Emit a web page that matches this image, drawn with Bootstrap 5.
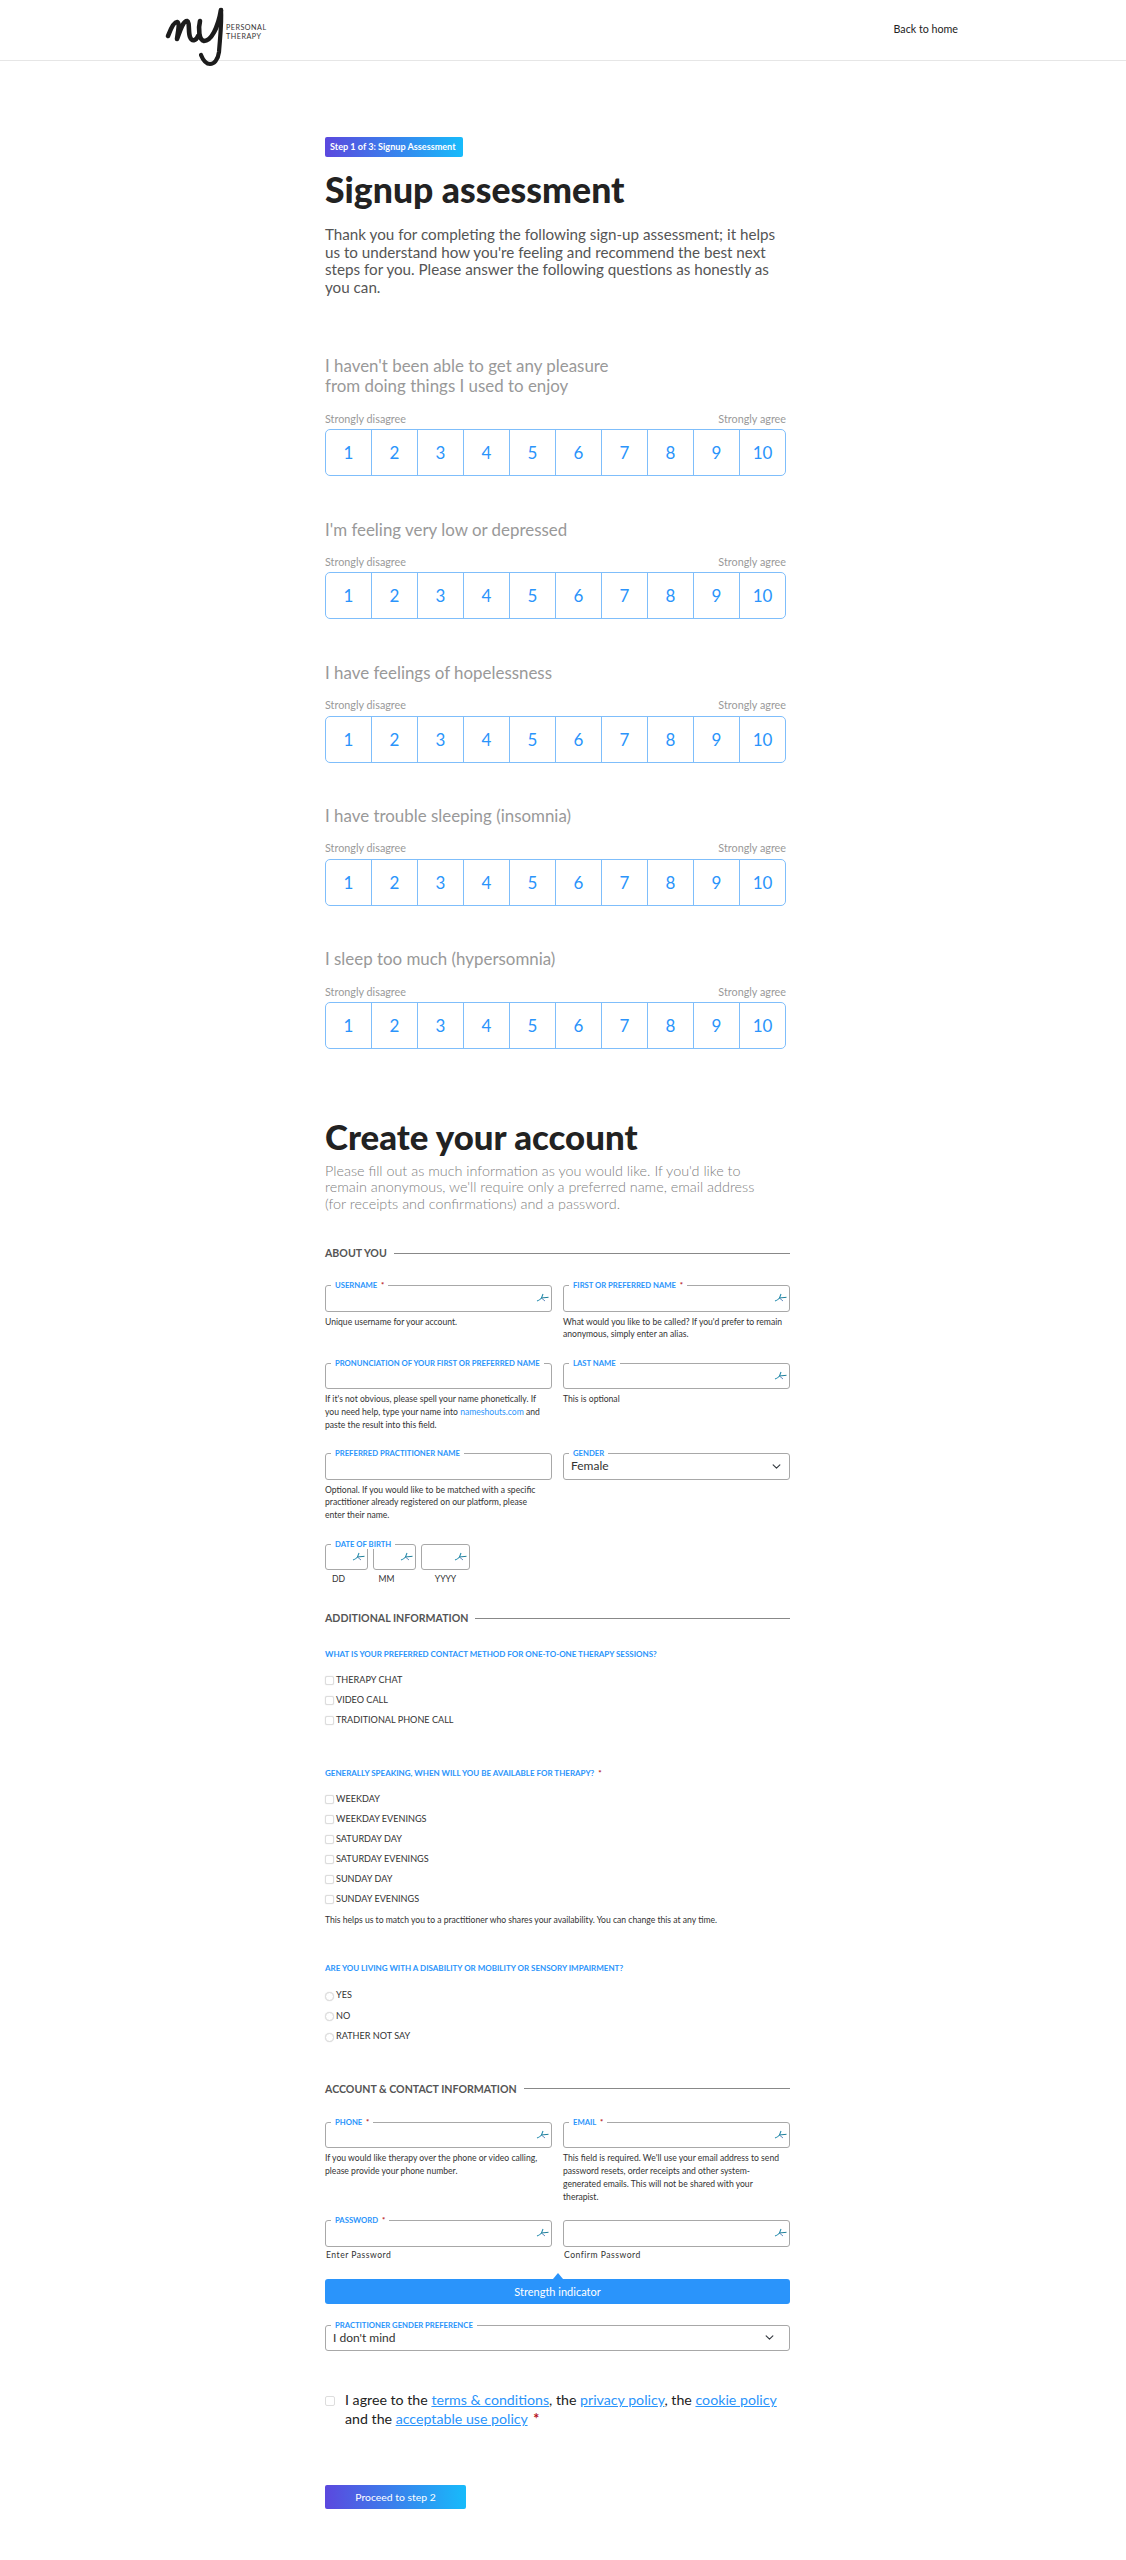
<!doctype html>
<html lang="en"><head><meta charset="utf-8"><title>Signup assessment</title>
<link rel="stylesheet" href="https://cdn.jsdelivr.net/npm/bootstrap@5.3.0/dist/css/bootstrap.min.css">
<style>
body{font-family:Lato,"Noto Sans",sans-serif;color:#222;background:#fff;height:2560px;overflow-x:hidden}
a{color:#2a94fb}
.topbar{height:61px;border-bottom:1px solid #e6e6e6;padding:8px 168px 0 165px;align-items:flex-start}
.logo-mark{width:60px;height:60px;overflow:visible;flex:none}
.logo-words{font-size:7.2px;line-height:9px;letter-spacing:.5px;color:#333;margin:15px 0 0 1px}
.home-link{font-size:10.7px;color:#222;text-decoration:none;margin-top:14px;line-height:14px}
.pagecol{width:466px;margin-left:325px;margin-top:76px}
.step-pill{width:138px;height:20px;line-height:20px;font-size:9.1px;font-weight:700;color:#fff;padding:0 5px;border-radius:2px;background:linear-gradient(90deg,#5b48de,#17bbfb);white-space:nowrap}
.big-title{font-size:35.6px;line-height:40px;font-weight:900;color:#222;margin:13px 0 0}
.big-title-b{font-size:34.8px;margin-top:68px}
.intro-text{font-size:15.2px;line-height:17.5px;color:#555;margin:16px 0 0;font-weight:400}
.q-title{font-size:16.9px;line-height:20.7px;color:#999;margin:0;font-weight:400}
.q-wrap{margin-top:43.6px}
.q-first{margin-top:59.6px}
.end-labels{font-size:10.8px;line-height:12px;color:#999;margin:15.5px 0 4.5px;width:461px}
.scale-bar{width:461px;height:47px}
.scale-bar .btn{flex:1 1 0;padding:0;font-size:17px;color:#2a94fb;border:1px solid #7fbefb;background:#fff;line-height:45px;--bs-btn-border-radius:5px}
.sub-title{font-size:14.4px;line-height:16.2px;color:#808080;margin:6px 0 0;font-weight:300}
.section-rule{font-size:10.6px;line-height:12px;font-weight:700;color:#555;width:465px;gap:7px;text-transform:uppercase}
.section-rule::after{content:"";flex:1;height:1px;background:#888}
.form-band{width:465px}
.fields{--bs-gutter-x:11px;--bs-gutter-y:0}
.fbox{position:relative;margin-top:0}
.fbox .form-control,.fbox .form-select{height:26.5px;border:1px solid #a8a8a8;border-radius:3px;padding:0 7px;font-size:12px;color:#333;box-shadow:none;min-height:0}
.fbox .form-select{background-position:right 7px center;background-size:11px 9px}
.fbox .wide-pick{background-position:right 14px center}
.float-label{position:absolute;z-index:2;left:6px;top:-5px;background:#fff;padding:0 4px;font-size:7.7px;line-height:10px;font-weight:700;color:#2a94fb;text-transform:uppercase;white-space:nowrap;margin:0}
.req{color:#b5121b;margin-left:2px;font-weight:700}
.key-mark{position:absolute;right:3px;top:8px;width:13px;height:9px}
.hint{font-size:8.6px;line-height:12.8px;color:#333;margin:4px 0 21.5px}
.hint a{text-decoration:none}
.hint-tight{margin-bottom:16.5px}
.hint-flat{margin:5px 0 0}
.dob-row{gap:5px;margin-bottom:2px}
.dob-cap{font-size:8.6px;line-height:10px;color:#333;text-align:center}
.w-dd{width:43px}.w-yy{width:49px}
.q-blue{font-size:8px;line-height:10px;font-weight:700;color:#2a94fb;text-transform:uppercase;margin:0}
.opt-list{margin-top:11px}
.opt-row{height:20px;font-size:9.1px;line-height:20px;color:#333;gap:2px;margin:0;padding:0;min-height:0;text-transform:uppercase}
.opt-row .form-check-input{width:9px;height:9px;margin:0;border:1px solid #ddd;border-radius:2px;box-shadow:0 0 1px #ccc;float:none;flex:none}
.opt-row .form-check-input[type=radio]{border-radius:50%;margin-top:2px}
.radio-step{height:20.5px}
.pw-cap{font-size:8.6px;line-height:10px;letter-spacing:.5px;color:#333;margin:3px 0 0 1px}
.meter{height:25px;background:#2a94fb;color:#fff;font-size:11px;line-height:25px;text-align:center;border-radius:3px;margin-top:19px;position:relative;width:465px}
.meter::before{content:"";position:absolute;left:50%;margin-left:-5px;top:-6px;border:5px solid transparent;border-top:0;border-bottom:6px solid #2a94fb}
.agree-row{width:465px;margin-top:39px;gap:10px}
.agree-row .form-check-input{width:10px;height:10px;margin:6px 0 0;border:1px solid #ddd;border-radius:2px;flex:none;float:none}
.agree-text{font-size:14.2px;line-height:19px;color:#222;margin:0}
.go-btn{display:block;width:141px;height:24px;line-height:24px;padding:0;margin-top:56.5px;border:0;border-radius:2px;color:#fff;font-size:10.4px;background:linear-gradient(90deg,#5b48de,#17bbfb)}
.rule-a{margin:35.4px 0 26px}
.rule-b{margin:28px 0 25px}
.rule-c{margin:36.5px 0 27px}
.gap-38{margin-top:38px}
.gap-36{margin-top:36px}
.opt-list-r{margin-top:12px}
.gap-21{margin-top:21px}
</style></head>
<body>
<svg width="0" height="0" class="position-absolute"><defs><symbol id="keyglyph" viewBox="0 0 13 9"><path d="M1 8Q4 7 5.500 5L7 1" fill="none" stroke="#2a8fb0" stroke-width="1.100"/><path d="M5 5L12.500 4.300" fill="none" stroke="#1f7f9a" stroke-width="1"/><path d="M6 5.500L9 8" fill="none" stroke="#3f6fb0" stroke-width=".8"/></symbol></defs></svg>
<nav class="navbar topbar d-flex justify-content-between">
<div class="d-flex">
<svg class="logo-mark" viewBox="0 0 60 60" aria-label="my"><g fill="none" stroke="#1c1c1c" stroke-linecap="round" stroke-linejoin="round"><path d="M3 28C6 20 9 14 12 14C15 15 13 24 12 31C15 23 18 13 22 13C25 14 23 24 25 29C27 34 31 33 33 28" stroke-width="4.600"/><path d="M35 13C33 21 34 32 39 33C46 33 53 20 56 2" stroke-width="4.600"/><path d="M56 2C57 14 55 30 54 44C53 52 49 56 45 56C41 56 38 52 36 47" stroke-width="4.200"/></g></svg>
<div class="logo-words">PERSONAL<br>THERAPY</div>
</div>
<a class="home-link" href="#">Back to home</a>
</nav>
<main class="pagecol">
<div class="step-pill">Step 1 of 3: Signup Assessment</div>
<h1 class="big-title">Signup assessment</h1>
<p class="intro-text">Thank you for completing the following sign-up assessment; it helps<br>us to understand how you're feeling and recommend the best next<br>steps for you. Please answer the following questions as honestly as<br>you can.</p>

<section class="q-first">
<p class="q-title">I haven't been able to get any pleasure<br>from doing things I used to enjoy</p>
<div class="end-labels d-flex justify-content-between"><span>Strongly disagree</span><span>Strongly agree</span></div>
<div class="btn-group scale-bar d-flex"><button class="btn">1</button><button class="btn">2</button><button class="btn">3</button><button class="btn">4</button><button class="btn">5</button><button class="btn">6</button><button class="btn">7</button><button class="btn">8</button><button class="btn">9</button><button class="btn">10</button></div>
</section>
<section class="q-wrap">
<p class="q-title">I'm feeling very low or depressed</p>
<div class="end-labels d-flex justify-content-between"><span>Strongly disagree</span><span>Strongly agree</span></div>
<div class="btn-group scale-bar d-flex"><button class="btn">1</button><button class="btn">2</button><button class="btn">3</button><button class="btn">4</button><button class="btn">5</button><button class="btn">6</button><button class="btn">7</button><button class="btn">8</button><button class="btn">9</button><button class="btn">10</button></div>
</section>
<section class="q-wrap">
<p class="q-title">I have feelings of hopelessness</p>
<div class="end-labels d-flex justify-content-between"><span>Strongly disagree</span><span>Strongly agree</span></div>
<div class="btn-group scale-bar d-flex"><button class="btn">1</button><button class="btn">2</button><button class="btn">3</button><button class="btn">4</button><button class="btn">5</button><button class="btn">6</button><button class="btn">7</button><button class="btn">8</button><button class="btn">9</button><button class="btn">10</button></div>
</section>
<section class="q-wrap">
<p class="q-title">I have trouble sleeping (insomnia)</p>
<div class="end-labels d-flex justify-content-between"><span>Strongly disagree</span><span>Strongly agree</span></div>
<div class="btn-group scale-bar d-flex"><button class="btn">1</button><button class="btn">2</button><button class="btn">3</button><button class="btn">4</button><button class="btn">5</button><button class="btn">6</button><button class="btn">7</button><button class="btn">8</button><button class="btn">9</button><button class="btn">10</button></div>
</section>
<section class="q-wrap">
<p class="q-title">I sleep too much (hypersomnia)</p>
<div class="end-labels d-flex justify-content-between"><span>Strongly disagree</span><span>Strongly agree</span></div>
<div class="btn-group scale-bar d-flex"><button class="btn">1</button><button class="btn">2</button><button class="btn">3</button><button class="btn">4</button><button class="btn">5</button><button class="btn">6</button><button class="btn">7</button><button class="btn">8</button><button class="btn">9</button><button class="btn">10</button></div>
</section>

<h2 class="big-title big-title-b">Create your account</h2>
<p class="sub-title">Please fill out as much information as you would like. If you'd like to<br>remain anonymous, we'll require only a preferred name, email address<br>(for receipts and confirmations) and a password.</p>

<div class="form-band">
<div class="section-rule rule-a d-flex align-items-center">About you</div>
<div class="row fields">
<div class="col-6"><div class="fbox"><input class="form-control" type="text"><label class="float-label">Username <span class="req">*</span></label><svg class="key-mark"><use href="#keyglyph"/></svg></div><p class="hint">Unique username for your account.</p></div>
<div class="col-6"><div class="fbox"><input class="form-control" type="text"><label class="float-label">First or preferred name <span class="req">*</span></label><svg class="key-mark"><use href="#keyglyph"/></svg></div><p class="hint">What would you like to be called? If you'd prefer to remain<br>anonymous, simply enter an alias.</p></div>
<div class="col-6"><div class="fbox"><input class="form-control" type="text"><label class="float-label">Pronunciation of your first or preferred name</label></div><p class="hint">If it's not obvious, please spell your name phonetically. If<br>you need help, type your name into <a href="#">nameshouts.com</a> and<br>paste the result into this field.</p></div>
<div class="col-6"><div class="fbox"><input class="form-control" type="text"><label class="float-label">Last name</label><svg class="key-mark"><use href="#keyglyph"/></svg></div><p class="hint">This is optional</p></div>
<div class="col-6"><div class="fbox"><input class="form-control" type="text"><label class="float-label">Preferred practitioner name</label></div><p class="hint">Optional. If you would like to be matched with a specific<br>practitioner already registered on our platform, please<br>enter their name.</p></div>
<div class="col-6"><div class="fbox"><select class="form-select"><option>Female</option></select><label class="float-label">Gender</label></div></div>
</div>
<div class="d-flex dob-row">
<div class="w-dd"><div class="fbox"><input class="form-control" type="text"><label class="float-label">Date of birth</label><svg class="key-mark"><use href="#keyglyph"/></svg></div><div class="dob-cap pe-3 mt-1">DD</div></div>
<div class="w-dd"><div class="fbox"><input class="form-control" type="text"><svg class="key-mark"><use href="#keyglyph"/></svg></div><div class="dob-cap pe-3 mt-1">MM</div></div>
<div class="w-yy"><div class="fbox"><input class="form-control" type="text"><svg class="key-mark"><use href="#keyglyph"/></svg></div><div class="dob-cap mt-1">YYYY</div></div>
</div>
<div class="section-rule rule-b d-flex align-items-center">Additional information</div>
<p class="q-blue">What is your preferred contact method for one-to-one therapy sessions?</p>
<div class="opt-list">
<label class="form-check opt-row d-flex align-items-center"><input class="form-check-input" type="checkbox">Therapy chat</label>
<label class="form-check opt-row d-flex align-items-center"><input class="form-check-input" type="checkbox">Video call</label>
<label class="form-check opt-row d-flex align-items-center"><input class="form-check-input" type="checkbox">Traditional phone call</label>
</div>
<p class="q-blue gap-38">Generally speaking, when will you be available for therapy? <span class="req">*</span></p>
<div class="opt-list">
<label class="form-check opt-row d-flex align-items-center"><input class="form-check-input" type="checkbox">Weekday</label>
<label class="form-check opt-row d-flex align-items-center"><input class="form-check-input" type="checkbox">Weekday evenings</label>
<label class="form-check opt-row d-flex align-items-center"><input class="form-check-input" type="checkbox">Saturday day</label>
<label class="form-check opt-row d-flex align-items-center"><input class="form-check-input" type="checkbox">Saturday evenings</label>
<label class="form-check opt-row d-flex align-items-center"><input class="form-check-input" type="checkbox">Sunday day</label>
<label class="form-check opt-row d-flex align-items-center"><input class="form-check-input" type="checkbox">Sunday evenings</label>
</div>
<p class="hint hint-flat">This helps us to match you to a practitioner who shares your availability. You can change this at any time.</p>
<p class="q-blue gap-36">Are you living with a disability or mobility or sensory impairment?</p>
<div class="opt-list-r">
<label class="form-check opt-row radio-step d-flex align-items-center"><input class="form-check-input" type="radio" name="impair">Yes</label>
<label class="form-check opt-row radio-step d-flex align-items-center"><input class="form-check-input" type="radio" name="impair">No</label>
<label class="form-check opt-row radio-step d-flex align-items-center"><input class="form-check-input" type="radio" name="impair">Rather not say</label>
</div>
<div class="section-rule rule-c d-flex align-items-center">Account &amp; contact information</div>
<div class="row fields">
<div class="col-6"><div class="fbox"><input class="form-control" type="text"><label class="float-label">Phone <span class="req">*</span></label><svg class="key-mark"><use href="#keyglyph"/></svg></div><p class="hint hint-tight">If you would like therapy over the phone or video calling,<br>please provide your phone number.</p></div>
<div class="col-6"><div class="fbox"><input class="form-control" type="text"><label class="float-label">Email <span class="req">*</span></label><svg class="key-mark"><use href="#keyglyph"/></svg></div><p class="hint hint-tight">This field is required. We'll use your email address to send<br>password resets, order receipts and other system-<br>generated emails. This will not be shared with your<br>therapist.</p></div>
<div class="col-6"><div class="fbox"><input class="form-control" type="password"><label class="float-label">Password <span class="req">*</span></label><svg class="key-mark"><use href="#keyglyph"/></svg></div><div class="pw-cap">Enter Password</div></div>
<div class="col-6"><div class="fbox"><input class="form-control" type="password"><svg class="key-mark"><use href="#keyglyph"/></svg></div><div class="pw-cap">Confirm Password</div></div>
</div>
<div class="meter">Strength indicator</div>
<div class="fbox gap-21"><select class="form-select wide-pick"><option>I don't mind</option></select><label class="float-label">Practitioner gender preference</label></div>
<div class="d-flex agree-row"><input class="form-check-input" type="checkbox"><p class="agree-text">I agree to the <a href="#">terms &amp; conditions</a>, the <a href="#">privacy policy</a>, the <a href="#">cookie policy</a><br>and the <a href="#">acceptable use policy</a> <span class="req">*</span></p></div>
<button class="btn go-btn">Proceed to step 2</button>
</div>
</main>
<script src="https://cdn.jsdelivr.net/npm/bootstrap@5.3.0/dist/js/bootstrap.bundle.min.js"></script>
</body></html>
